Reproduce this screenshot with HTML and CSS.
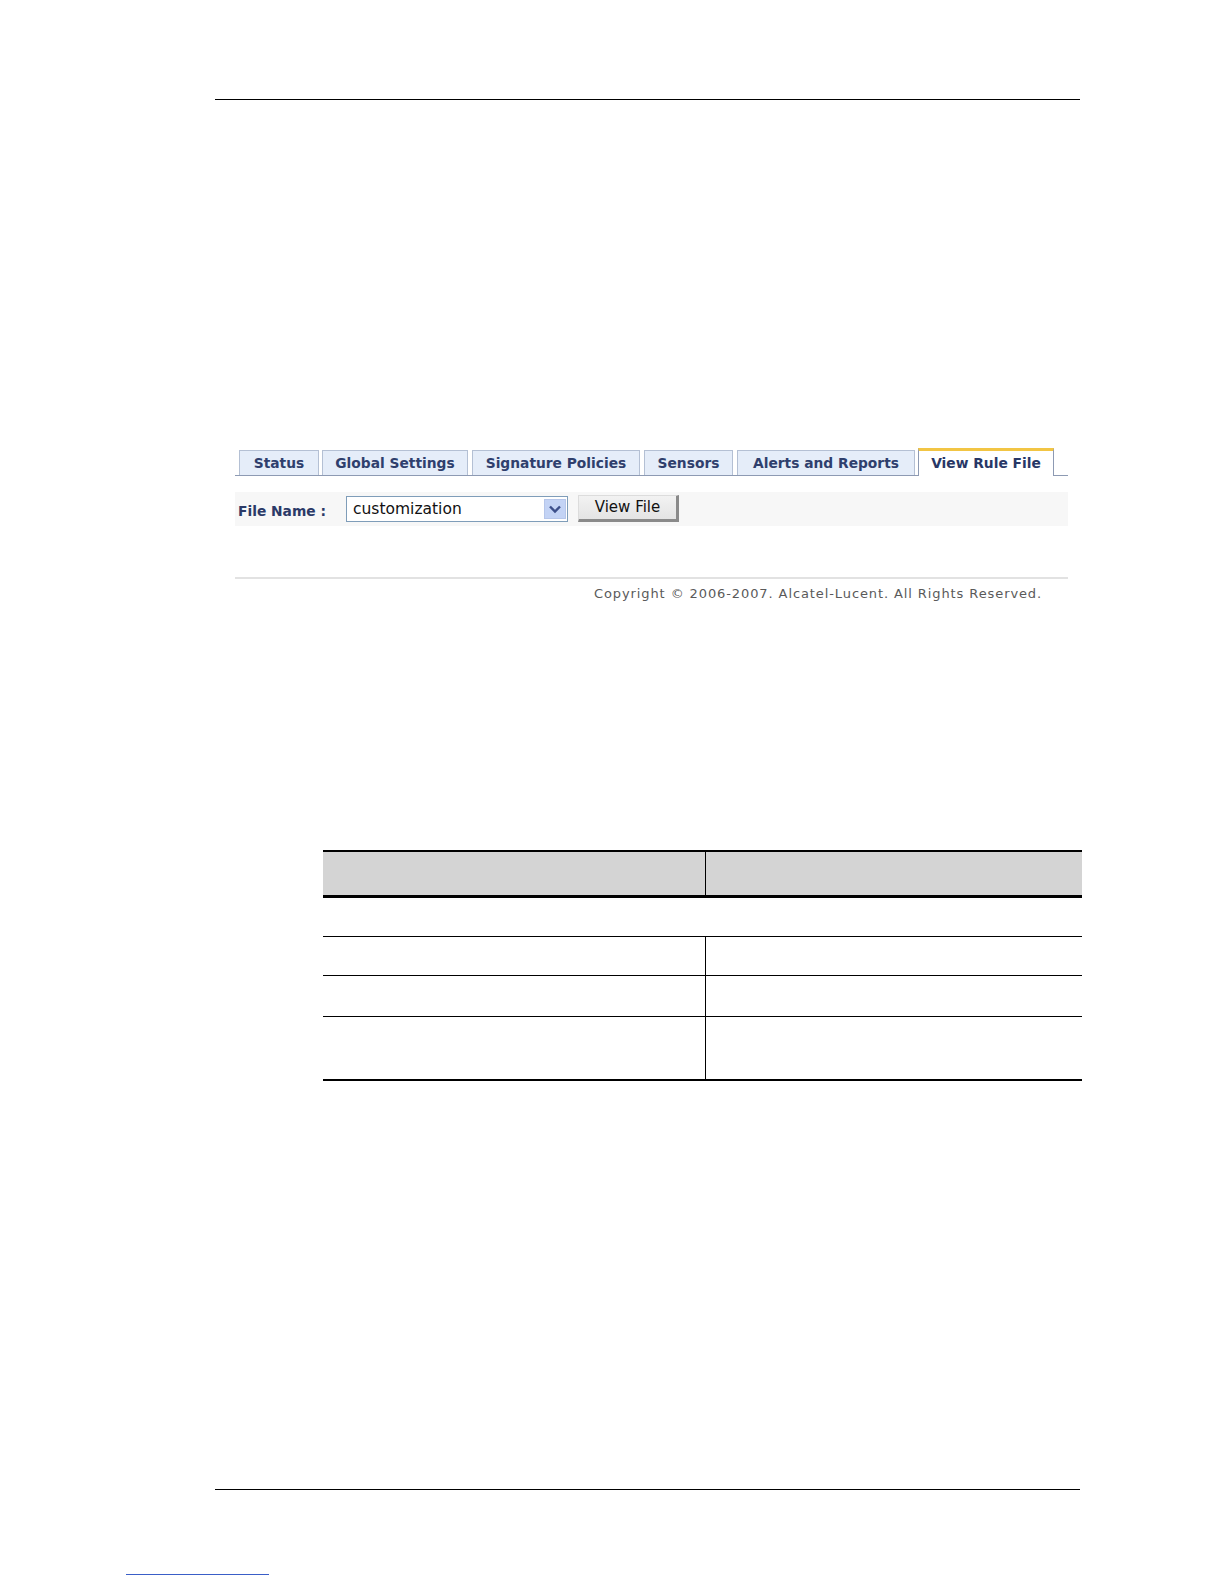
FILE: index.html
```html
<!DOCTYPE html>
<html>
<head>
<meta charset="utf-8">
<link rel="stylesheet" href="styles.css">
</head>
<body>
<div class="doc">
  <div class="rule rule-top"></div>

  <div class="app">
    <div class="tabs">
      <div class="tab t1">Status</div>
      <div class="tab t2">Global Settings</div>
      <div class="tab t3">Signature Policies</div>
      <div class="tab t4">Sensors</div>
      <div class="tab t5">Alerts and Reports</div>
      <div class="tab active">View Rule File</div>
    </div>
    <div class="form-row">
      <span class="label">File Name :</span>
      <div class="select">
        <span class="select-text">customization</span>
        <span class="select-btn">
          <svg width="14" height="10" viewBox="0 0 14 10"><path d="M2 2.5 L7 7.5 L12 2.5" fill="none" stroke="#3c4f8a" stroke-width="2.4"/></svg>
        </span>
      </div>
      <div class="button">View File</div>
    </div>
    <div class="separator"></div>
    <div class="copyright">Copyright © 2006-2007. Alcatel-Lucent. All Rights Reserved.</div>
  </div>

  <table class="spec">
    <thead>
      <tr><th class="c1"></th><th class="c2"></th></tr>
    </thead>
    <tbody>
      <tr class="span-row"><td colspan="2"></td></tr>
      <tr class="r1"><td class="c1"></td><td class="c2"></td></tr>
      <tr class="r2"><td class="c1"></td><td class="c2"></td></tr>
      <tr class="r3 last"><td class="c1"></td><td class="c2"></td></tr>
    </tbody>
  </table>

  <div class="rule rule-bottom"></div>
  <div class="link-line"></div>
</div>
</body>
</html>
```

FILE: styles.css
```css
html, body {
  margin: 0;
  padding: 0;
  background: #ffffff;
}

body {
  width: 1224px;
  height: 1584px;
  overflow: hidden;
  font-family: "DejaVu Sans", Verdana, sans-serif;
}

.doc {
  width: 1224px;
  height: 1584px;
  padding-top: 99px;
  box-sizing: border-box;
}

.rule {
  margin-left: 215px;
  width: 865px;
  height: 1px;
  background: #000;
}

.app {
  margin-left: 235px;
  width: 833px;
  margin-top: 349px;
}

.tabs {
  display: flex;
  align-items: flex-end;
  gap: 4px;
  padding-left: 4px;
  height: 26px;
  border-bottom: 1px solid #8d9ab3;
}

.tab {
  box-sizing: border-box;
  height: 25px;
  border: 1px solid #b4c0d4;
  border-bottom: none;
  background: #e5edf9;
  color: #2f3f6d;
  font-weight: bold;
  font-size: 13.8px;
  line-height: 24px;
  text-align: center;
}

.t1 { width: 80px; margin-right: -1px; }
.t2 { width: 146px; }
.t3 { width: 168px; }
.t4 { width: 89px; }
.t5 { width: 178px; margin-right: -1px; }

.tab.active {
  width: 136px;
  height: 28px;
  margin-bottom: -1px;
  background: #ffffff;
  border: 1px solid #8d9ab3;
  border-top: 3px solid #f2c544;
  border-bottom: none;
  line-height: 25px;
  color: #283766;
}

.form-row {
  display: flex;
  align-items: center;
  margin-top: 16px;
  height: 34px;
  background: #f7f7f7;
}

.label {
  margin-left: 3px;
  width: 108px;
  color: #2b3a67;
  font-weight: bold;
  font-size: 13.8px;
  padding-top: 4px;
}

.select {
  box-sizing: border-box;
  width: 222px;
  height: 26px;
  border: 1px solid #7f9db9;
  background: #fff;
  display: flex;
  align-items: center;
  justify-content: space-between;
  padding-left: 6px;
  padding-right: 1px;
}

.select-text {
  font-size: 15.5px;
  color: #111;
}

.select-btn {
  width: 22px;
  height: 20px;
  background: #c3d3f5;
  border: 1px solid #b6c6ea;
  box-sizing: border-box;
  display: flex;
  align-items: center;
  justify-content: center;
}

.button {
  box-sizing: border-box;
  margin-left: 10px;
  width: 101px;
  height: 27px;
  margin-top: -2px;
  background: linear-gradient(#f2f2f2, #e4e4e4);
  border-top: 1px solid #dcdcdc;
  border-left: 1px solid #dcdcdc;
  border-right: 3px solid #8a8a8a;
  border-bottom: 3px solid #8a8a8a;
  font-size: 15px;
  color: #111;
  text-align: center;
  line-height: 22px;
}

.separator {
  margin-top: 51px;
  height: 2px;
  background: #e2e2e2;
}

.copyright {
  margin-top: 7px;
  padding-left: 359px;
  color: #5a5a5a;
  font-size: 13px;
  line-height: 16px;
  letter-spacing: 0.9px;
  white-space: nowrap;
}

.spec {
  margin-left: 323px;
  margin-top: 248px;
  width: 759px;
  border-collapse: collapse;
  table-layout: fixed;
}

.spec th, .spec td {
  padding: 0;
}

.spec .c1 { width: 382px; }

.spec thead tr {
  height: 45px;
  background: #d4d4d4;
  border-top: 2px solid #000;
  border-bottom: 3px solid #000;
}

.spec th.c1 {
  border-right: 1px solid #000;
}

.spec .span-row {
  height: 40px;
}

.spec .span-row td {
  border-bottom: 1px solid #000;
}

.spec .r1 { height: 39px; }
.spec .r2 { height: 41px; }
.spec .r3 { height: 64px; }

.spec .r1 td, .spec .r2 td {
  border-bottom: 1px solid #000;
}

.spec .r3 td {
  border-bottom: 2px solid #000;
}

.spec td.c1 {
  border-right: 1px solid #000;
}

.rule-bottom {
  margin-top: 408px;
}

.link-line {
  margin-left: 126px;
  margin-top: 84px;
  width: 143px;
  height: 1px;
  background: #3a5ec8;
}
```
